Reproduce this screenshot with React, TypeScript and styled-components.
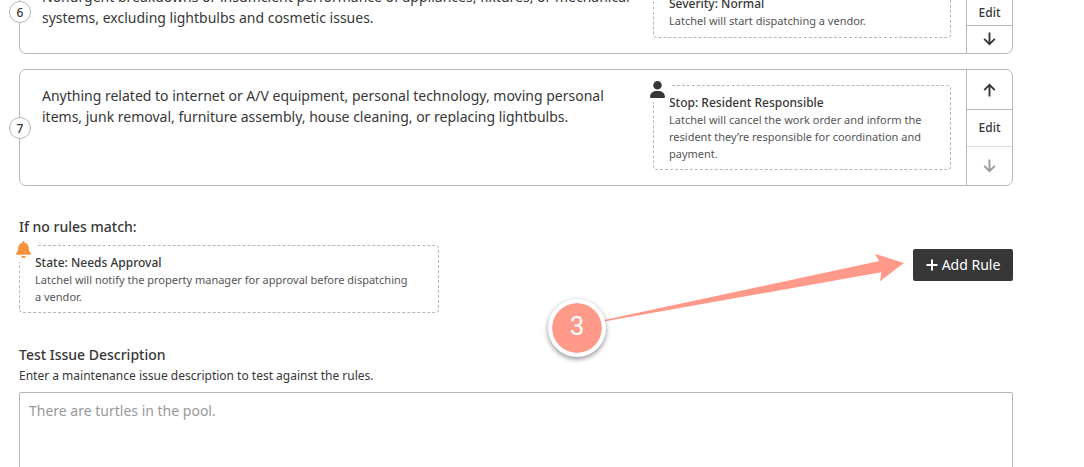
import React from "react";
import styled, { createGlobalStyle } from "styled-components";
import { FaBell, FaUser } from "react-icons/fa6";

const ink = "#373737";
const line = "#b7b7b7";

const GlobalStyle = createGlobalStyle`
  *, *::before, *::after { box-sizing: border-box; }
  body {
    margin: 0;
    background: #fff;
    color: ${ink};
    font-family: "Segoe UI", "Noto Sans", "Open Sans", sans-serif;
    font-size: 14px;
    line-height: 21px;
    overflow: hidden;
  }
  h2, p, ol { margin: 0; padding: 0; }
  button, textarea { font: inherit; color: inherit; }
`;

const Page = styled.main`
  padding: 0 71px 0 19px;
`;

const RuleList = styled.ol`
  display: flex;
  flex-direction: column;
  gap: 15px;
  margin-top: -30px;
  list-style: none;
`;

const RuleCard = styled.li`
  position: relative;
  display: flex;
  min-height: 84px;
  border: 1px solid ${line};
  border-radius: 7px;
`;

const RuleNumber = styled.span`
  position: absolute;
  top: 50%;
  left: -11px;
  transform: translateY(-50%);
  display: grid;
  place-items: center;
  width: 22px;
  height: 22px;
  border: 1px solid ${line};
  border-radius: 50%;
  background: #fff;
  font-size: 12px;
  font-weight: 500;
`;

const RuleBody = styled.div`
  flex: 1;
  display: flex;
  gap: 15px;
  padding: 15px 15px 15px 22px;
`;

const RuleText = styled.p`
  flex: 1;
`;

const Outcome = styled.div<{ $width: number }>`
  position: relative;
  flex: none;
  width: ${(p) => p.$width}px;
  padding: 8px 24px 7px 15px;
  border: 1px dashed ${line};
  border-radius: 4px;
`;

const OutcomeIcon = styled.span<{ $color: string }>`
  position: absolute;
  top: -5px;
  left: -5px;
  display: flex;
  padding: 0 4px 4px 0;
  background: #fff;
  color: ${(p) => p.$color};
`;

const OutcomeTitle = styled.p`
  font-size: 12px;
  line-height: 17px;
  font-weight: 500;
`;

const OutcomeText = styled.p`
  font-size: 11px;
  line-height: 17px;
  color: #555;
`;

const Actions = styled.div`
  display: flex;
  flex-direction: column;
  width: 46px;
  border-left: 1px solid ${line};
`;

const ActionButton = styled.button<{ $basis: number }>`
  flex: 1 0 ${(p) => p.$basis}px;
  display: grid;
  place-items: center;
  padding: 0;
  border: 0;
  background: none;
  font-size: 12px;
  line-height: 17px;
  font-weight: 500;

  & + & { border-top: 1px solid ${line}; }
  &:disabled { opacity: 0.5; }
`;

const FallbackRow = styled.section`
  position: relative;
  display: flex;
  align-items: center;
  justify-content: space-between;
  margin-top: 30px;
`;

const FallbackRule = styled.div`
  display: flex;
  flex-direction: column;
  gap: 8px;
`;

const Heading = styled.h2`
  font-size: 14px;
  line-height: 21px;
  font-weight: 500;
`;

const AddButton = styled.button`
  display: flex;
  align-items: center;
  justify-content: center;
  gap: 4px;
  width: 100px;
  height: 32px;
  padding: 0;
  border: 0;
  border-radius: 2px;
  background: ${ink};
  color: #fff;
`;

const Callout = styled.div`
  position: absolute;
  top: 30px;
  right: 107px;
  width: 358px;
  height: 112px;
  pointer-events: none;
`;

const CalloutNumber = styled.span`
  position: absolute;
  left: 0;
  bottom: 1px;
  display: grid;
  justify-content: center;
  align-content: start;
  width: 58px;
  height: 58px;
  border: 4px solid #fff;
  border-radius: 50%;
  background: #ff9a8b;
  background-clip: padding-box;
  box-shadow: 0 2px 5px rgba(0, 0, 0, 0.45);
  color: #fff;
  font: 26px/46px Roboto, sans-serif;
`;

const TestSection = styled.section`
  display: flex;
  flex-direction: column;
  margin-top: 31px;
`;

const FieldLabel = styled.label`
  font-weight: 500;
`;

const Hint = styled.p`
  font-size: 12px;
  line-height: 21px;
  margin-bottom: 6px;
`;

const IssueInput = styled.textarea`
  display: block;
  width: 100%;
  height: 90px;
  padding: 7px 9px;
  border: 1px solid ${line};
  border-radius: 2px;
  resize: none;

  &::placeholder { color: #999; opacity: 1; }
`;

function Arrow({ down = false }: { down?: boolean }) {
  return (
    <svg width="13" height="14" viewBox="0 0 13 14" fill="none" stroke="currentColor" strokeWidth="1.9" aria-hidden="true">
      <path d={down ? "M6.5 .5V12.4M1.2 6.8L6.5 12.1L11.8 6.8" : "M6.5 13.5V1.6M1.2 7.2L6.5 1.9L11.8 7.2"} />
    </svg>
  );
}

function Rule({ number, text, last, children }: { number: number; text: string; last?: boolean; children: React.ReactNode }) {
  return (
    <RuleCard>
      <RuleNumber>{number}</RuleNumber>
      <RuleBody>
        <RuleText>{text}</RuleText>
        {children}
      </RuleBody>
      <Actions>
        <ActionButton $basis={28} aria-label="Move up"><Arrow /></ActionButton>
        <ActionButton $basis={25}>Edit</ActionButton>
        <ActionButton $basis={28} aria-label="Move down" disabled={last}><Arrow down /></ActionButton>
      </Actions>
    </RuleCard>
  );
}

export default function App() {
  return (
    <>
      <GlobalStyle />
      <Page>
        <RuleList>
          <Rule
            number={6}
            text="Nonurgent breakdowns or insufficient performance of appliances, fixtures, or mechanical systems, excluding lightbulbs and cosmetic issues."
          >
            <Outcome $width={298}>
              <OutcomeTitle>Severity: Normal</OutcomeTitle>
              <OutcomeText>Latchel will start dispatching a vendor.</OutcomeText>
            </Outcome>
          </Rule>
          <Rule
            number={7}
            last
            text="Anything related to internet or A/V equipment, personal technology, moving personal items, junk removal, furniture assembly, house cleaning, or replacing lightbulbs."
          >
            <Outcome $width={298}>
              <OutcomeIcon $color={ink}><FaUser size={17} /></OutcomeIcon>
              <OutcomeTitle>Stop: Resident Responsible</OutcomeTitle>
              <OutcomeText>
                Latchel will cancel the work order and inform the resident they’re responsible for coordination and payment.
              </OutcomeText>
            </Outcome>
          </Rule>
        </RuleList>

        <FallbackRow>
          <FallbackRule>
            <Heading>If no rules match:</Heading>
            <Outcome $width={420}>
              <OutcomeIcon $color="#f5923e"><FaBell size={17} /></OutcomeIcon>
              <OutcomeTitle>State: Needs Approval</OutcomeTitle>
              <OutcomeText>
                Latchel will notify the property manager for approval before dispatching a vendor.
              </OutcomeText>
            </Outcome>
          </FallbackRule>
          <AddButton>
            <svg width="12" height="12" viewBox="0 0 12 12" stroke="currentColor" strokeWidth="2" aria-hidden="true">
              <path d="M6 .5V11.5M.5 6H11.5" />
            </svg>
            Add Rule
          </AddButton>
          <Callout>
            <svg width="358" height="112" viewBox="548 246 358 112" aria-hidden="true">
              <path fill="#ff9a8b" d="M604 320L879.3 261L874.7 253.7L904 263L880 281.2L881.3 272.3L604 321.5Z" />
            </svg>
            <CalloutNumber>3</CalloutNumber>
          </Callout>
        </FallbackRow>

        <TestSection>
          <FieldLabel htmlFor="issue">Test Issue Description</FieldLabel>
          <Hint id="issue-hint">Enter a maintenance issue description to test against the rules.</Hint>
          <IssueInput id="issue" aria-describedby="issue-hint" placeholder="There are turtles in the pool." />
        </TestSection>
      </Page>
    </>
  );
}
